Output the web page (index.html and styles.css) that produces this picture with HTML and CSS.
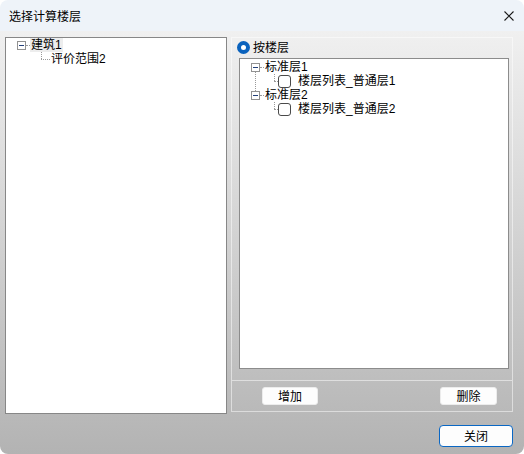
FILE: index.html
```html
<!DOCTYPE html>
<html lang="zh">
<head>
<meta charset="utf-8">
<title>选择计算楼层</title>
<link rel="stylesheet" href="styles.css">
</head>
<body>
<div class="window">
  <div class="titlebar">
    <span class="title">选择计算楼层</span>
    <svg class="close" viewBox="0 0 10 10" width="10" height="10"><path d="M0.5 0.5 L9.5 9.5 M9.5 0.5 L0.5 9.5" stroke="#1a1a1a" stroke-width="1.1" fill="none"/></svg>
  </div>
  <div class="body">
    <div class="main">
      <div class="left-panel">
        <div class="row root-left">
          <span class="exp"></span><span class="hline-l"></span><span class="sel">建筑1</span>
        </div>
        <div class="row child-left"><span>评价范围2</span></div>
      </div>
      <div class="group">
        <div class="group-top">
          <div class="radio-row"><span class="radio"></span><span>按楼层</span></div>
          <div class="tree-box">
            <div class="row root-right first"><span class="exp"></span><span class="hline-r"></span><span>标准层1</span></div>
            <div class="row child-right"><span class="cb"></span><span>楼层列表_普通层1</span></div>
            <div class="row root-right"><span class="exp"></span><span class="hline-r"></span><span>标准层2</span></div>
            <div class="row child-right"><span class="cb"></span><span>楼层列表_普通层2</span></div>
          </div>
        </div>
        <div class="group-bottom">
          <button class="btn btn-add">增加</button>
          <button class="btn btn-del">删除</button>
        </div>
      </div>
    </div>
    <div class="footer"><button class="btn btn-close">关闭</button></div>
  </div>
</div>
</body>
</html>
```
FILE: styles.css
```css
* { box-sizing: border-box; }
html, body { margin: 0; padding: 0; }
body {
  width: 524px;
  height: 454px;
  background: #ffffff;
  font-family: "Liberation Sans", "Noto Sans CJK SC", sans-serif;
  font-size: 12px;
  color: #000;
  overflow: hidden;
}
.window {
  width: 524px;
  height: 454px;
  border-radius: 8px;
  overflow: hidden;
  display: flex;
  flex-direction: column;
}
.titlebar {
  height: 31px;
  flex: none;
  background: #eef3f9;
  display: flex;
  align-items: center;
  justify-content: space-between;
  padding: 0 10px 0 9px;
}
.title {
  font-family: "Noto Sans CJK SC", sans-serif;
  font-size: 12px;
  line-height: 14px;
}
.close { display: block; }
.body {
  flex: 1;
  background: linear-gradient(#f0f0f0, #b3b3b3);
  padding: 6px 0 0 5px;
}
.main {
  display: flex;
  gap: 4px;
  align-items: flex-start;
}
.left-panel {
  width: 222px;
  height: 377px;
  border: 1px solid #878787;
  background: #fff;
  padding-left: 11px;
}
.row {
  position: relative;
  height: 14px;
  display: flex;
  align-items: center;
  line-height: 14px;
  white-space: nowrap;
}
.exp {
  position: relative;
  flex: none;
  width: 9px;
  height: 9px;
  border: 1px solid #929292;
  background: #fff;
}
.exp::after {
  content: "";
  position: absolute;
  left: 1px;
  top: 3px;
  width: 5px;
  height: 1px;
  background: #23407a;
}
.hline-l {
  width: 4px;
  border-top: 1px dotted #9a9a9a;
}
.sel {
  background: #ededed;
  padding: 0 1px;
  margin-left: 0;
  height: 14px;
}
.child-left { padding-left: 34px; }
.child-left::before {
  content: "";
  position: absolute;
  left: 24px;
  top: 0;
  height: 7px;
  border-left: 1px dotted #9a9a9a;
}
.child-left::after {
  content: "";
  position: absolute;
  left: 24px;
  top: 7px;
  width: 9px;
  border-top: 1px dotted #9a9a9a;
}
.group {
  width: 282px;
  height: 375px;
  border: 1px solid rgba(255, 255, 255, 0.5);
  display: flex;
  flex-direction: column;
}
.group-top {
  height: 343px;
  border-bottom: 1px solid rgba(255, 255, 255, 0.5);
}
.radio-row {
  height: 20px;
  display: flex;
  align-items: center;
  padding-left: 5px;
  gap: 3px;
  line-height: 14px;
}
.radio {
  width: 13px;
  height: 13px;
  border-radius: 50%;
  border: 4px solid #0a62bd;
  background: #fff;
  margin-top: -1px;
}
.tree-box {
  margin: 0 3px 0 7px;
  height: 311px;
  border: 1px solid #8c8c8c;
  background: #fff;
  padding: 1px 0 0 11px;
}
.hline-r {
  width: 4px;
  border-top: 1px dotted #9a9a9a;
  margin-right: 1px;
}
.root-right.first::before {
  content: "";
  position: absolute;
  left: 4px;
  top: 10px;
  height: 21px;
  border-left: 1px dotted #9a9a9a;
}
.child-right { padding-left: 27px; }
.child-right::before {
  content: "";
  position: absolute;
  left: 23px;
  top: 0;
  height: 7px;
  border-left: 1px dotted #9a9a9a;
}
.child-right::after {
  content: "";
  position: absolute;
  left: 23px;
  top: 7px;
  width: 4px;
  border-top: 1px dotted #9a9a9a;
}
.cb {
  flex: none;
  width: 13px;
  height: 13px;
  border: 1px solid #4a4a4a;
  border-radius: 3px;
  background: #fff;
  margin-right: 7px;
}
.group-bottom {
  height: 30px;
  display: flex;
  justify-content: space-between;
  align-items: flex-start;
  padding: 6px 15px 0 30px;
}
.btn {
  font-family: "Noto Sans CJK SC", sans-serif;
  font-size: 12px;
  line-height: 14px;
  color: #000;
  background: #fdfdfd;
  border: 1px solid #ececec;
  border-radius: 3px;
  padding: 0;
}
.btn-add { width: 56px; height: 18px; }
.btn-del { width: 57px; height: 18px; }
.footer {
  display: flex;
  justify-content: flex-end;
  padding-right: 11px;
  margin-top: 11px;
}
.btn-close {
  width: 74px;
  height: 22px;
  border: 1px solid #0a67c4;
  border-radius: 4px;
  background: #fdfdfd;
}
```
